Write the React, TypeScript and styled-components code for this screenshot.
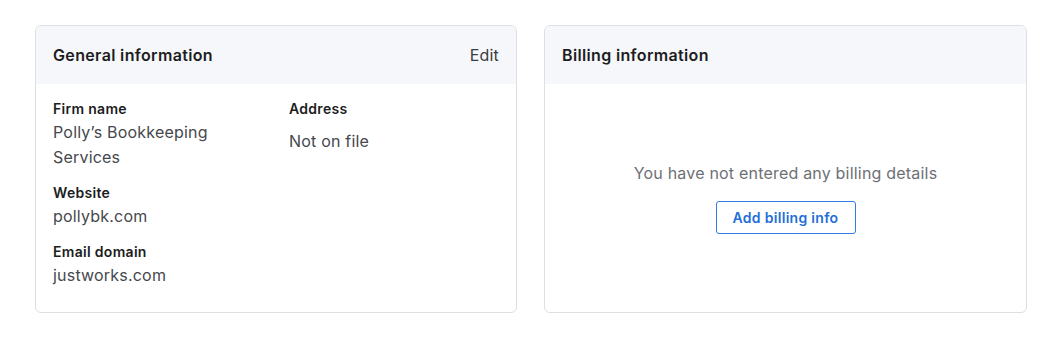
import React from 'react';
import styled, { createGlobalStyle } from 'styled-components';

const GlobalStyle = createGlobalStyle`
  body {
    margin: 0;
    background: #ffffff;
    font-family: Inter, "Noto Sans", sans-serif;
    -webkit-font-smoothing: antialiased;
  }
`;

const Page = styled.div`
  display: grid;
  grid-template-columns: 482px 483px;
  gap: 27px;
  padding: 25px 35px;
`;

const Card = styled.section`
  display: flex;
  flex-direction: column;
  height: 288px;
  box-sizing: border-box;
  border: 1px solid #dcdfe4;
  border-radius: 6px;
  background: #ffffff;
  overflow: hidden;
`;

const CardHeader = styled.header`
  display: flex;
  align-items: center;
  justify-content: space-between;
  height: 58px;
  padding: 0 17px;
  background: #f6f7fa;
`;

const CardTitle = styled.h2`
  margin: 0;
  font-size: 16px;
  font-weight: 600;
  letter-spacing: 0.35px;
  color: #1c1d21;
`;

const EditLink = styled.button`
  border: none;
  background: none;
  padding: 0;
  font-family: inherit;
  font-size: 16px;
  letter-spacing: 0.2px;
  color: #3a3c41;
  cursor: pointer;
`;

const InfoBody = styled.div`
  display: grid;
  grid-template-columns: 236px 1fr;
  padding: 15px 17px;
`;

const Column = styled.div`
  display: flex;
  flex-direction: column;
  gap: 13px;
`;

const Field = styled.div`
  display: flex;
  flex-direction: column;
  max-width: 175px;
`;

const Label = styled.span`
  font-size: 14px;
  font-weight: 600;
  line-height: 20px;
  letter-spacing: 0.3px;
  color: #1c1d21;
`;

const Value = styled.span<{ $offset?: number }>`
  margin-top: ${({ $offset }) => $offset ?? 1}px;
  font-size: 16px;
  line-height: 25px;
  letter-spacing: 0.2px;
  color: #45484d;
`;

const EmptyBody = styled.div`
  flex: 1;
  display: flex;
  flex-direction: column;
  align-items: center;
  justify-content: center;
  gap: 18px;
`;

const EmptyText = styled.p`
  margin: 0;
  font-size: 16px;
  line-height: 20px;
  letter-spacing: 0.2px;
  color: #6d7076;
`;

const OutlineButton = styled.button`
  height: 33px;
  width: 140px;
  border: 1px solid #2f7de1;
  border-radius: 3px;
  background: #ffffff;
  font-family: inherit;
  font-size: 14px;
  font-weight: 600;
  letter-spacing: 0.3px;
  color: #1f6fd6;
  cursor: pointer;
`;

const App: React.FC = () => {
  return (
    <>
      <GlobalStyle />
      <Page>
        <Card>
          <CardHeader>
            <CardTitle>General information</CardTitle>
            <EditLink>Edit</EditLink>
          </CardHeader>
          <InfoBody>
            <Column>
              <Field>
                <Label>Firm name</Label>
                <Value>Polly’s Bookkeeping Services</Value>
              </Field>
              <Field>
                <Label>Website</Label>
                <Value>pollybk.com</Value>
              </Field>
              <Field>
                <Label>Email domain</Label>
                <Value>justworks.com</Value>
              </Field>
            </Column>
            <Column>
              <Field>
                <Label>Address</Label>
                <Value $offset={10}>Not on file</Value>
              </Field>
            </Column>
          </InfoBody>
        </Card>
        <Card>
          <CardHeader>
            <CardTitle>Billing information</CardTitle>
          </CardHeader>
          <EmptyBody>
            <EmptyText>You have not entered any billing details</EmptyText>
            <OutlineButton>Add billing info</OutlineButton>
          </EmptyBody>
        </Card>
      </Page>
    </>
  );
};

export default App;
